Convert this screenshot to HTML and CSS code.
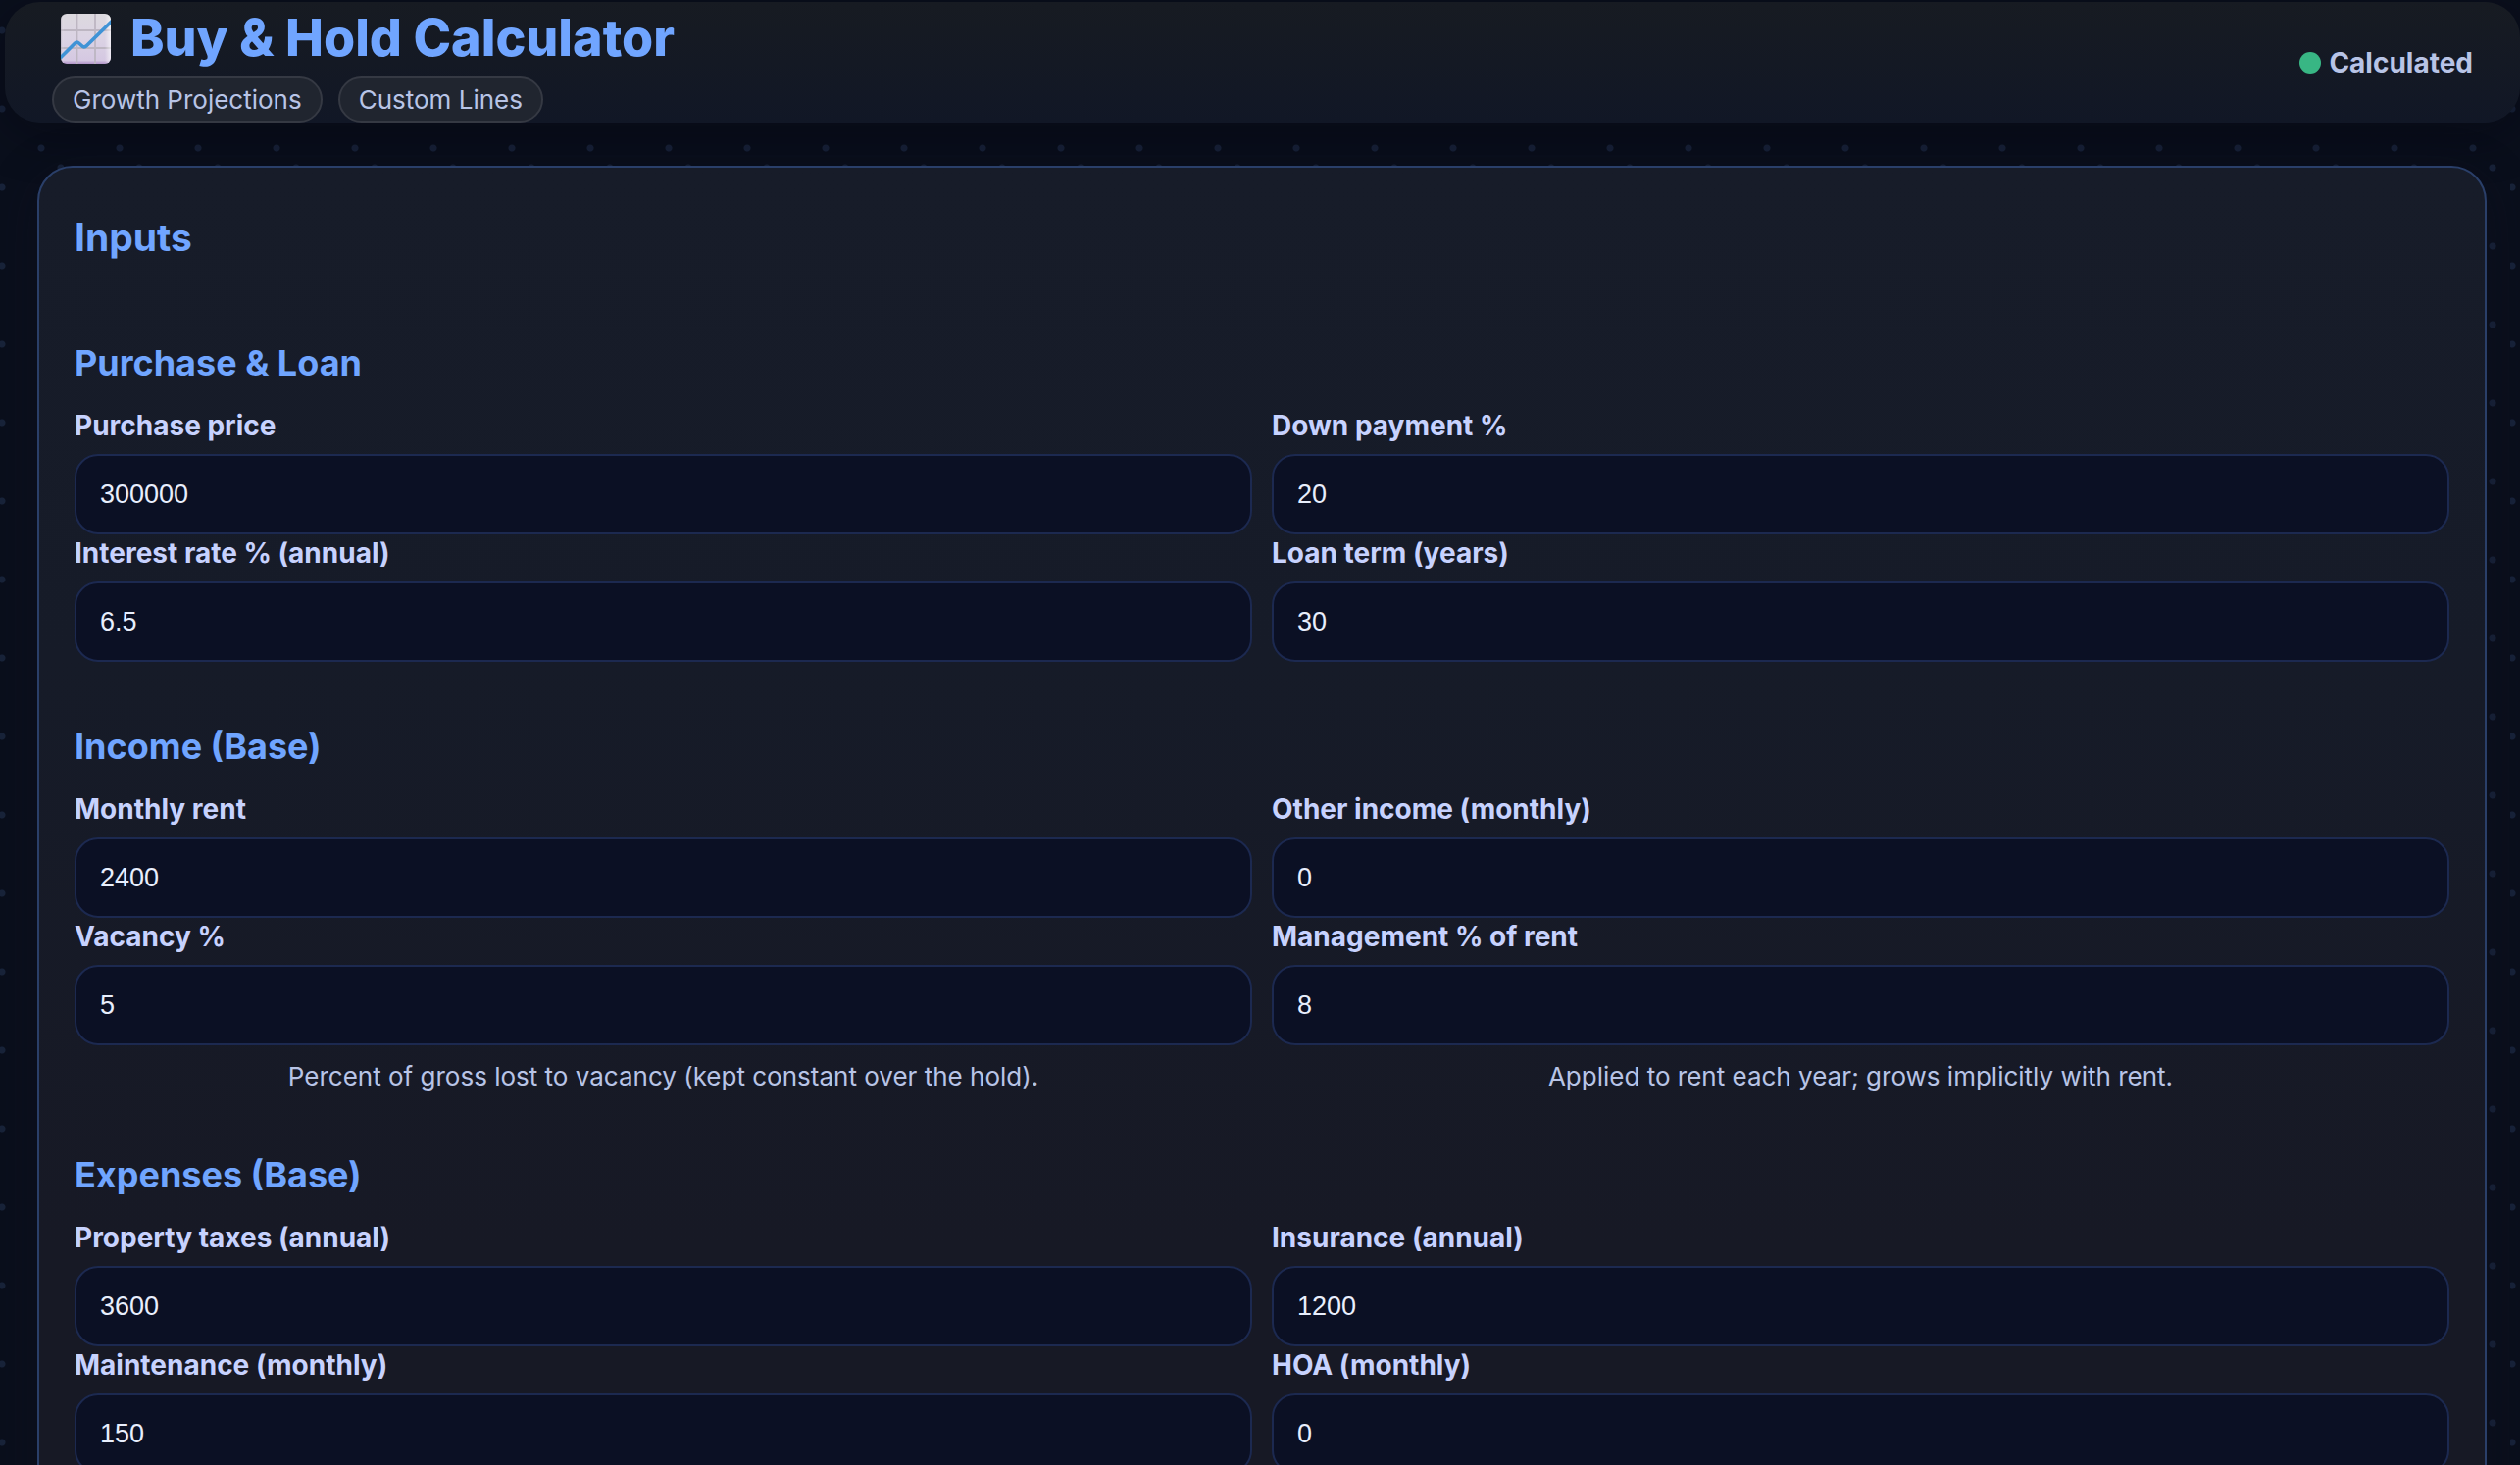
FILE: index.html
```html
<!DOCTYPE html>
<html lang="en">
<head>
<meta charset="utf-8">
<meta name="viewport" content="width=device-width, initial-scale=1">
<title>Buy &amp; Hold Calculator</title>
<link rel="stylesheet" href="styles.css">
</head>
<body>
<header class="topbar">
  <div class="brand">
    <h1 class="title">
      <svg class="title-icon" viewBox="0 0 51 51" aria-hidden="true">
        <defs>
          <linearGradient id="paper" x1="0" y1="0" x2="0" y2="1">
            <stop offset="0" stop-color="#dcd9de"/>
            <stop offset=".5" stop-color="#dbd3e4"/>
            <stop offset=".93" stop-color="#d5c8e2"/>
            <stop offset="1" stop-color="#b093c8"/>
          </linearGradient>
          <linearGradient id="sheen" x1="0" y1="0" x2="1" y2="0">
            <stop offset="0" stop-color="#a79fae" stop-opacity=".6"/>
            <stop offset=".06" stop-color="#fff" stop-opacity="0"/>
            <stop offset=".88" stop-color="#fff" stop-opacity="0"/>
            <stop offset="1" stop-color="#fff" stop-opacity=".6"/>
          </linearGradient>
          <clipPath id="sheet"><rect width="51" height="51" rx="6"/></clipPath>
        </defs>
        <g clip-path="url(#sheet)">
          <rect width="51" height="51" fill="url(#paper)"/>
          <path d="M16.500 0V51M35 0V51M0 17H51M0 35H51" stroke="#bdb6c2" stroke-width="1.800" fill="none"/>
          <rect width="51" height="51" fill="url(#sheen)"/>
          <path d="M-2 46.500L14.500 30Q16.500 28 18.500 30L22.500 33.500Q24.500 34.500 26.500 32.500L53 6.500" stroke="#3f93d6" stroke-width="3.600" fill="none"/>
        </g>
      </svg>
      Buy &amp; Hold Calculator
    </h1>
    <ul class="chips">
      <li class="chip">Growth Projections</li>
      <li class="chip">Custom Lines</li>
    </ul>
  </div>
  <p class="status" role="status"><span class="status-dot"></span>Calculated</p>
</header>

<main class="card">
  <h2 class="card-title">Inputs</h2>

  <section class="group">
    <h3 class="group-title">Purchase &amp; Loan</h3>
    <div class="fields">
      <div class="field"><label for="price">Purchase price</label><input id="price" type="number" value="300000"></div>
      <div class="field"><label for="down">Down payment %</label><input id="down" type="number" value="20"></div>
      <div class="field"><label for="rate">Interest rate % (annual)</label><input id="rate" type="number" step="any" value="6.5"></div>
      <div class="field"><label for="term">Loan term (years)</label><input id="term" type="number" value="30"></div>
    </div>
  </section>

  <section class="group">
    <h3 class="group-title">Income (Base)</h3>
    <div class="fields">
      <div class="field"><label for="rent">Monthly rent</label><input id="rent" type="number" value="2400"></div>
      <div class="field"><label for="other">Other income (monthly)</label><input id="other" type="number" value="0"></div>
      <div class="field"><label for="vacancy">Vacancy %</label><input id="vacancy" type="number" value="5"><p class="hint">Percent of gross lost to vacancy (kept constant over the hold).</p></div>
      <div class="field"><label for="mgmt">Management % of rent</label><input id="mgmt" type="number" value="8"><p class="hint">Applied to rent each year; grows implicitly with rent.</p></div>
    </div>
  </section>

  <section class="group">
    <h3 class="group-title">Expenses (Base)</h3>
    <div class="fields">
      <div class="field"><label for="taxes">Property taxes (annual)</label><input id="taxes" type="number" value="3600"></div>
      <div class="field"><label for="insurance">Insurance (annual)</label><input id="insurance" type="number" value="1200"></div>
      <div class="field"><label for="maint">Maintenance (monthly)</label><input id="maint" type="number" value="150"></div>
      <div class="field"><label for="hoa">HOA (monthly)</label><input id="hoa" type="number" value="0"></div>
    </div>
  </section>
</main>
</body>
</html>
```
FILE: styles.css
```css
* { box-sizing: border-box; }

html { background: #0a0e1b; }

body {
  margin: 0;
  height: 100vh;
  overflow: hidden;
  display: flow-root;
  font-family: Inter, "Liberation Sans", sans-serif;
  color: #b8c4e6;
  background-color: #0a0f1c;
  background-image:
    radial-gradient(circle at 42px 71px, #18233a 3px, transparent 4px),
    radial-gradient(circle at 62px 11px, #18233a 3px, transparent 4px),
    radial-gradient(circle at 2px 31px, #18233a 3px, transparent 4px);
  background-size: 80px 80px;
}

h1, h2, h3, p, ul { margin: 0; padding: 0; }

.topbar {
  display: flex;
  justify-content: space-between;
  align-items: center;
  margin: 2px 0 44px 5px;
  padding: 0 48px;
  border-radius: 36px;
  background: linear-gradient(#171b22, #111726);
  box-shadow: 0 12px 48px rgba(5, 6, 16, .4);
}

.title {
  display: flex;
  align-items: center;
  gap: 20px;
  padding-left: 9px;
  font-size: 52px;
  line-height: 74px;
  font-weight: 800;
  color: #70a5ff;
}

.title-icon { width: 51px; height: 51px; }

.chips {
  display: flex;
  gap: 16px;
  margin-top: 2px;
  list-style: none;
}

.chip {
  padding: 0 19px;
  border: 2px solid #353943;
  border-radius: 24px;
  background: #20252f;
  font-size: 26px;
  line-height: 43px;
}

.status {
  display: flex;
  align-items: center;
  gap: 8px;
  font-size: 28px;
  line-height: 38px;
  font-weight: 700;
}

.status-dot {
  width: 22px;
  height: 22px;
  border-radius: 50%;
  background: #38b684;
}

.card {
  margin: 0 34px 36px 38px;
  padding: 48px 36px;
  border: 2px solid #2a3f69;
  border-radius: 36px;
  background: linear-gradient(#171c29, #161b28 500px, #171925 1100px);
  box-shadow: 0 12px 48px rgba(14, 14, 30, .4);
}

.card-title {
  margin-bottom: 83px;
  font-size: 39px;
  line-height: 46px;
  font-weight: 700;
  color: #70a5ff;
}

.group + .group { margin-top: 64px; }

.group-title {
  margin-bottom: 23px;
  font-size: 36px;
  line-height: 44px;
  font-weight: 700;
  color: #70a5ff;
}

.fields {
  display: grid;
  grid-template-columns: 1fr 1fr;
  column-gap: 20px;
}

.field { display: flex; flex-direction: column; }

.field label {
  margin-bottom: 10px;
  font-size: 28px;
  line-height: 38px;
  font-weight: 700;
  color: #c7d2fe;
}

.field input {
  width: 100%;
  height: 82px;
  padding: 0 24px;
  border: 2px solid #1c2950;
  border-radius: 24px;
  background: #0b1024;
  color: #e8eefc;
  font-family: "Liberation Sans", Arial, sans-serif;
  font-size: 27px;
}

.hint {
  margin-top: 18px;
  font-size: 26px;
  line-height: 28px;
  text-align: center;
}
```
